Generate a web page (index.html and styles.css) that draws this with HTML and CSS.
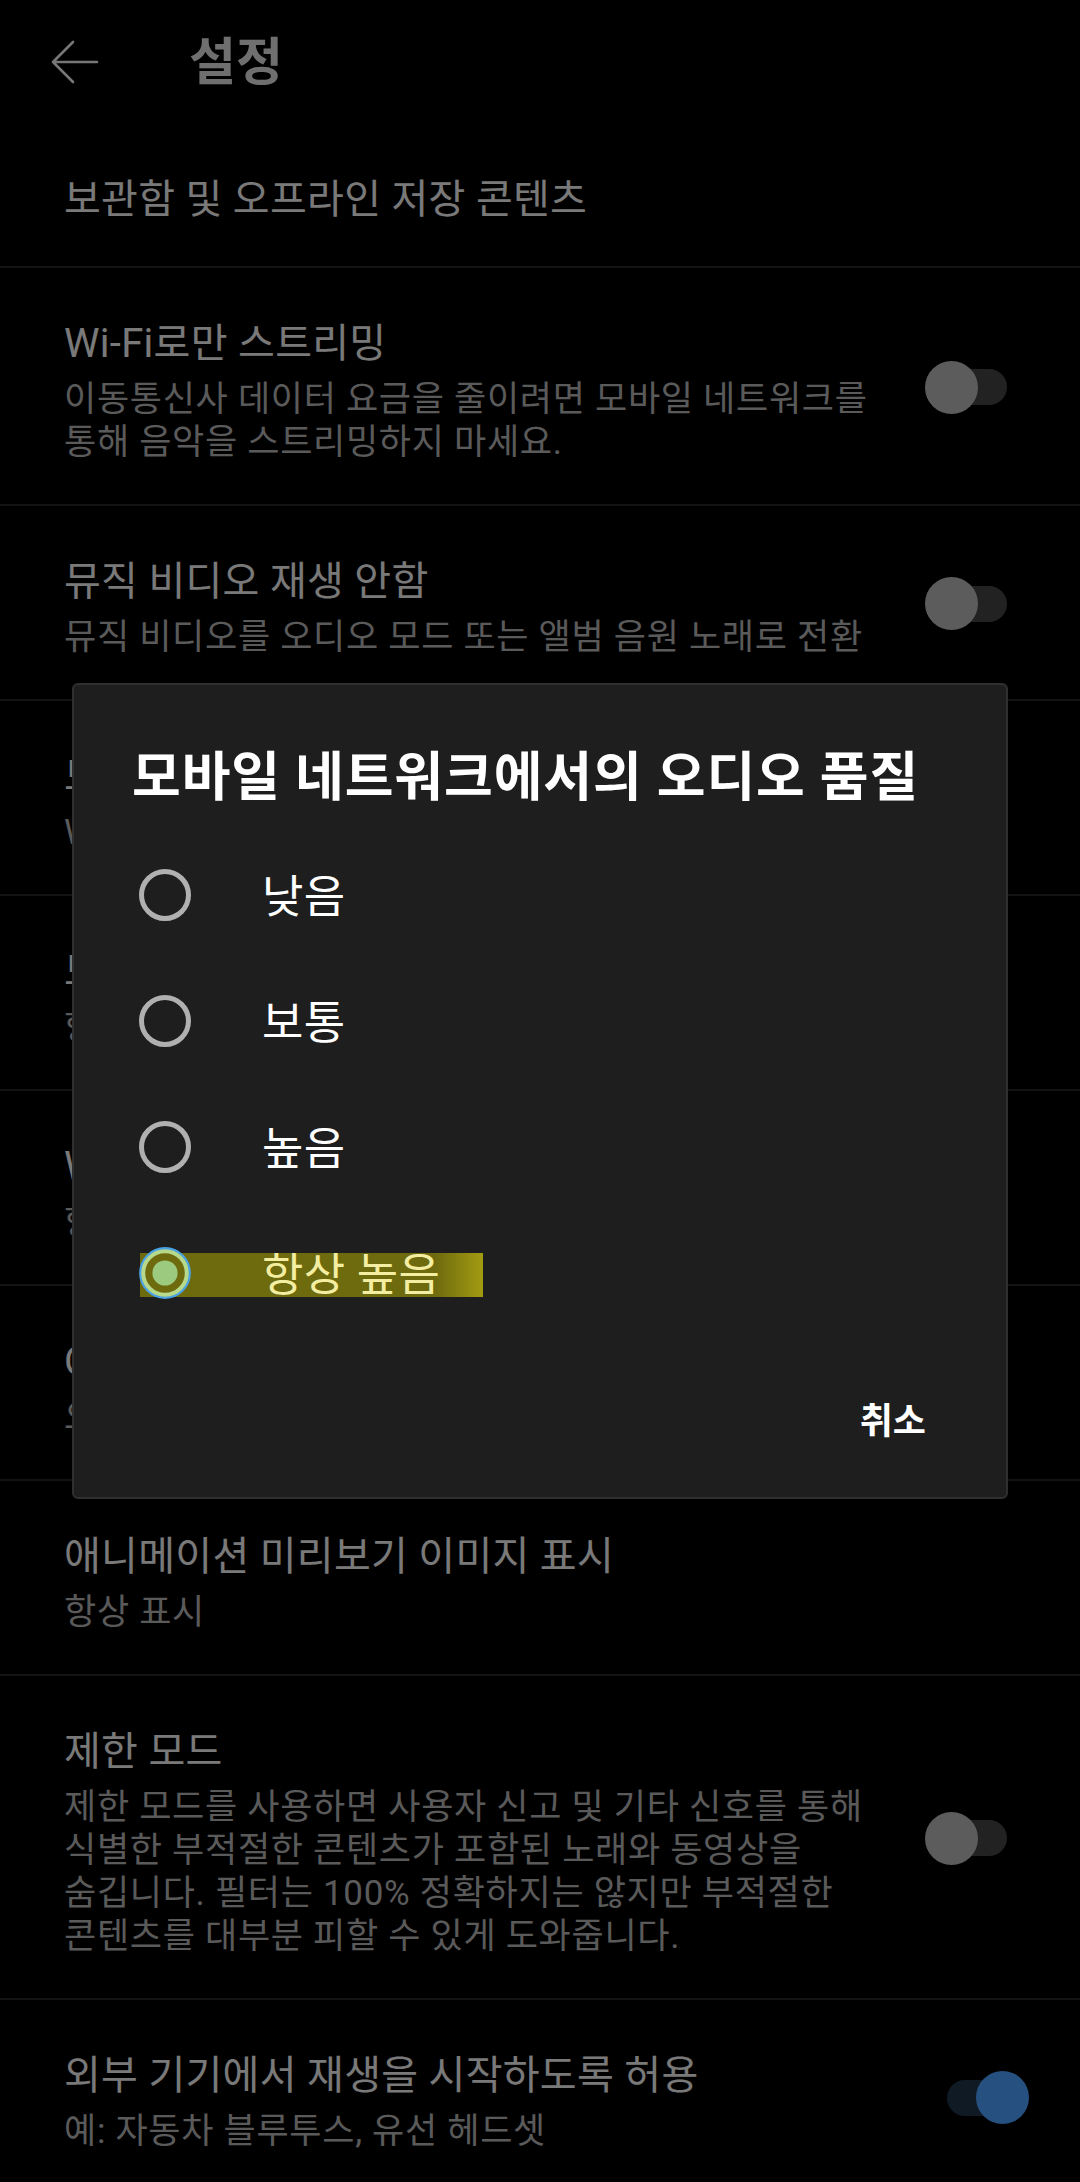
FILE: index.html
```html
<!DOCTYPE html>
<html lang="ko">
<head>
<meta charset="utf-8">
<title>설정</title>
<link rel="stylesheet" href="styles.css">
</head>
<body>
<div class="page">
  <header class="appbar">
    <svg class="back" viewBox="0 0 50 44" width="50" height="44" aria-hidden="true">
      <path d="M47 22H3M23 2L3 22l20 20" fill="none" stroke="#eeeeee" stroke-width="2.6" stroke-linecap="round" stroke-linejoin="round"/>
    </svg>
    <h1 class="appbar-title">설정</h1>
  </header>

  <div class="row">
    <div class="row-text"><div class="row-title">보관함 및 오프라인 저장 콘텐츠</div></div>
  </div>

  <div class="row">
    <div class="row-text">
      <div class="row-title">Wi-Fi로만 스트리밍</div>
      <div class="row-sub">이동통신사 데이터 요금을 줄이려면 모바일 네트워크를<br>통해 음악을 스트리밍하지 마세요.</div>
    </div>
    <div class="switch"><span class="track"></span><span class="thumb"></span></div>
  </div>

  <div class="row">
    <div class="row-text">
      <div class="row-title">뮤직 비디오 재생 안함</div>
      <div class="row-sub">뮤직 비디오를 오디오 모드 또는 앨범 음원 노래로 전환</div>
    </div>
    <div class="switch"><span class="track"></span><span class="thumb"></span></div>
  </div>

  <div class="row">
    <div class="row-text">
      <div class="row-title">모바일 네트워크 데이터 절약</div>
      <div class="row-sub">Wi-Fi에 연결된 경우에만 고화질</div>
    </div>
  </div>

  <div class="row">
    <div class="row-text">
      <div class="row-title">모바일 네트워크에서의 오디오 품질</div>
      <div class="row-sub">항상 높음</div>
    </div>
  </div>

  <div class="row">
    <div class="row-text">
      <div class="row-title">Wi-Fi에서의 오디오 품질</div>
      <div class="row-sub">항상 높음</div>
    </div>
  </div>

  <div class="row">
    <div class="row-text">
      <div class="row-title">Opus 오디오 코덱 사용</div>
      <div class="row-sub">오디오 품질 자동 조정</div>
    </div>
  </div>

  <div class="row">
    <div class="row-text">
      <div class="row-title">애니메이션 미리보기 이미지 표시</div>
      <div class="row-sub">항상 표시</div>
    </div>
  </div>

  <div class="row">
    <div class="row-text">
      <div class="row-title">제한 모드</div>
      <div class="row-sub">제한 모드를 사용하면 사용자 신고 및 기타 신호를 통해<br>식별한 부적절한 콘텐츠가 포함된 노래와 동영상을<br>숨깁니다. 필터는 100% 정확하지는 않지만 부적절한<br>콘텐츠를 대부분 피할 수 있게 도와줍니다.</div>
    </div>
    <div class="switch"><span class="track"></span><span class="thumb"></span></div>
  </div>

  <div class="row">
    <div class="row-text">
      <div class="row-title">외부 기기에서 재생을 시작하도록 허용</div>
      <div class="row-sub">예: 자동차 블루투스, 유선 헤드셋</div>
    </div>
    <div class="switch on"><span class="track"></span><span class="thumb"></span></div>
  </div>
</div>

<div class="scrim"></div>

<div class="dialog" role="dialog">
  <h2 class="dialog-title">모바일 네트워크에서의 오디오 품질</h2>
  <div class="options">
    <div class="option">
      <span class="radio"></span>
      <span class="option-label">낮음</span>
    </div>
    <div class="option">
      <span class="radio"></span>
      <span class="option-label">보통</span>
    </div>
    <div class="option">
      <span class="radio"></span>
      <span class="option-label">높음</span>
    </div>
    <div class="option selected">
      <span class="highlight"></span>
      <svg class="radio-on" viewBox="0 0 52 52" width="52" height="52" aria-hidden="true">
        <circle cx="26" cy="26" r="24.6" fill="none" stroke="#4aa2e6" stroke-width="2.6"/>
        <circle cx="26" cy="26" r="21.8" fill="none" stroke="#b7d98c" stroke-width="4"/>
        <circle cx="26" cy="26" r="12.6" fill="#9ccb80"/>
      </svg>
      <span class="option-label">항상 높음</span>
    </div>
  </div>
  <div class="actions">
    <span class="btn-text">취소</span>
  </div>
</div>
</body>
</html>
```

FILE: styles.css
```css
html, body {
  margin: 0;
  padding: 0;
  background: #000;
}

body {
  width: 1080px;
  height: 2182px;
  overflow: hidden;
  position: relative;
  font-family: Roboto, "Noto Sans CJK KR", sans-serif;
  color: #f1f1f1;
}

.page {
  display: flex;
  flex-direction: column;
}

.appbar {
  height: 124px;
  display: flex;
  align-items: center;
  padding-left: 50px;
}

.back {
  display: block;
  flex: none;
}

.appbar-title {
  margin: 2px 0 0 89px;
  font-size: 51px;
  font-weight: 700;
  line-height: 58px;
  color: #dedede;
}

.row {
  display: flex;
  align-items: center;
  padding: 46px 51px 44px 64px;
  border-bottom: 2px solid #272727;
}

.row-text {
  flex: 1;
  min-width: 0;
  white-space: nowrap;
  padding-top: 4px;
  margin-bottom: -4px;
}

.row-title {
  font-size: 40px;
  line-height: 52px;
  letter-spacing: 0.3px;
  color: #f2f2f2;
}

.row-sub {
  margin-top: 8px;
  font-size: 35px;
  line-height: 43px;
  letter-spacing: 0.7px;
  color: #b4b4b4;
}

.switch {
  position: relative;
  flex: none;
  width: 104px;
  height: 53px;
}

.switch .track {
  position: absolute;
  left: 4px;
  top: 8.5px;
  width: 78px;
  height: 36px;
  border-radius: 18px;
  background: #444;
}

.switch .thumb {
  position: absolute;
  left: 0;
  top: 0;
  width: 53px;
  height: 53px;
  border-radius: 50%;
  background: #b9b9b9;
}

.switch.on .track {
  left: 22px;
  background: #1e3448;
}

.switch.on .thumb {
  left: 51px;
  background: #4aa0ff;
}

.scrim {
  position: fixed;
  inset: 0;
  background: rgba(0, 0, 0, 0.5);
}

.dialog {
  position: absolute;
  left: 72px;
  top: 683px;
  width: 936px;
  height: 816px;
  box-sizing: border-box;
  border: 2px solid #2f2f2f;
  border-radius: 6px;
  background: #1e1e1e;
  display: flex;
  flex-direction: column;
}

.dialog-title {
  margin: 63px 0 0 58px;
  font-size: 53px;
  font-weight: 700;
  line-height: 60px;
  letter-spacing: 0.9px;
  color: #ffffff;
  white-space: nowrap;
}

.options {
  margin-top: 24px;
  display: flex;
  flex-direction: column;
}

.option {
  position: relative;
  height: 126px;
  display: flex;
  align-items: center;
  padding-left: 65px;
}

.radio {
  position: relative;
  z-index: 1;
  flex: none;
  width: 52px;
  height: 52px;
  box-sizing: border-box;
  border: 5px solid #b0b0b0;
  border-radius: 50%;
}

.radio-on {
  position: relative;
  z-index: 1;
  flex: none;
  display: block;
}

.option-label {
  position: relative;
  z-index: 1;
  margin-left: 71px;
  padding-top: 6px;
  font-size: 45px;
  line-height: 50px;
  letter-spacing: 0.3px;
  color: #ffffff;
}

.option.selected .option-label {
  color: #f4eea2;
}

.highlight {
  position: absolute;
  left: 66px;
  top: 43px;
  width: 343px;
  height: 44px;
  background: linear-gradient(90deg, #6e6a0e 0%, #6e6a0e 86%, #a39b12 100%);
  z-index: 0;
}

.actions {
  margin-top: 61px;
  display: flex;
  justify-content: flex-end;
  padding-right: 80px;
}

.btn-text {
  font-size: 36px;
  font-weight: 700;
  line-height: 50px;
  color: #ffffff;
}
```
